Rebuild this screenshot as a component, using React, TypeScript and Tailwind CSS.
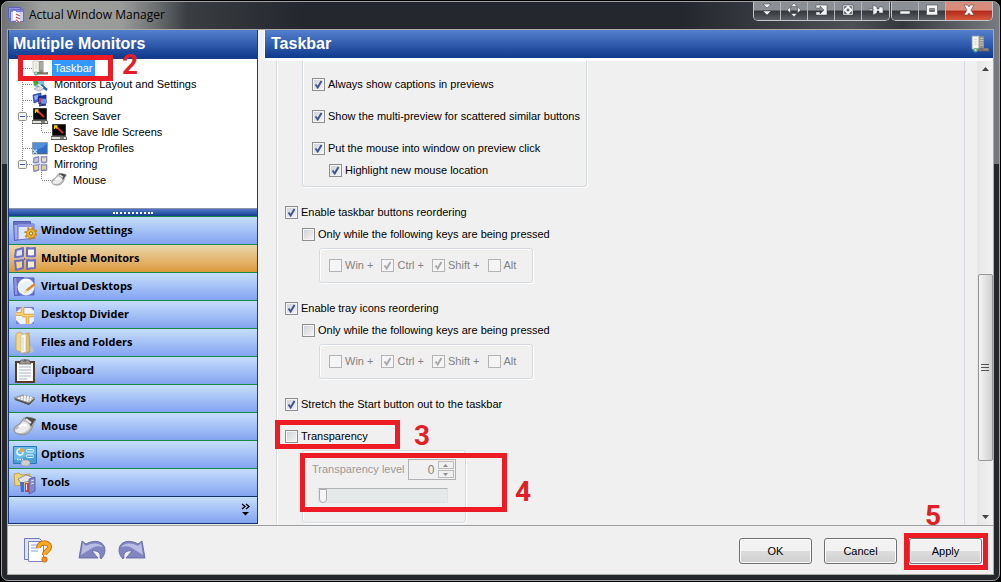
import { useState } from "react";
import type { ReactNode } from "react";
import clsx from "clsx";

const UI_FONT = "font-['Liberation_Sans',Arial,sans-serif]";
const CAPTION_FONT = "font-['Open_Sans','Noto_Sans',sans-serif]";

/* ---------- icons ---------- */

type IconProps = { className?: string };

function AppIcon() {
  return (
    <svg width="16" height="16" viewBox="0 0 16 16" aria-hidden="true">
      <path d="M.5.500h12v11H.5z" fill="#8d94e0" stroke="#5a60bc" />
      <path d="M2.500 2.500h13v12h-13z" fill="#c9d3f6" stroke="#6a70c6" />
      <path d="M3 3h12v2H3z" fill="#7e85d8" />
      <path d="M5 4h3v9H5z" fill="#fff" />
      <path d="M8 5l4 2v8H8z" fill="#fff" />
      <path d="M8 7l4 2M8 10l4 2M8 13l3 2" stroke="#d04a3c" strokeWidth="1.300" />
    </svg>
  );
}

function TaskbarIcon({ className = "size-4" }: IconProps) {
  return (
    <svg className={className} viewBox="0 0 16 16" aria-hidden="true">
      <path d="M6.500 1h5v11h-5z" fill="#8f8e88" />
      <path d="M8 3h3M8 5h3M8 7h3M8 9h3" stroke="#d2d0c8" strokeWidth=".8" />
      <path d="M1 1h6v11.500H1z" fill="#f4f4ee" stroke="#b5b5ab" strokeWidth=".7" />
      <path d="M3 4h2M3 6h2M3 8h2" stroke="#c0c0b8" strokeWidth=".6" />
      <path d="M5 12h11v2.500H5z" fill="#77736a" />
      <path d="M11 12.500h4" stroke="#a39a86" />
      <circle cx="4" cy="13.500" r="2" fill="#4f9fb8" />
      <circle cx="4" cy="13.300" r="1" fill="#d9e66a" />
    </svg>
  );
}

function LayoutIcon({ className = "size-4" }: IconProps) {
  return (
    <svg className={className} viewBox="0 0 16 16" aria-hidden="true">
      <path d="M2 2l8-1 2 8-8 2z" fill="#7cc4ee" stroke="#9aa3b2" />
      <path d="M1 4l4-2 2 6-5 2z" fill="#4ba53f" />
      <path d="M2 13l6-3 4 3-5 2z" fill="#d8dce2" stroke="#8e949e" strokeWidth=".6" />
      <path d="M9 9l6 5" stroke="#2464b4" strokeWidth="2.500" />
      <path d="M6 8l5 4" stroke="#f1f5fa" strokeWidth="1.500" />
    </svg>
  );
}

function BackgroundIcon({ className = "size-4" }: IconProps) {
  return (
    <svg className={className} viewBox="0 0 16 16" aria-hidden="true">
      <path d="M1 3l8-2v7l-7 3z" fill="#3c62d8" stroke="#2a3f98" strokeWidth=".8" />
      <path d="M2 4l4-1v4l-3 1z" fill="#8fb4ff" />
      <path d="M6 5l8-2v8l-7 1z" fill="#1d2fa8" stroke="#15207a" strokeWidth=".8" />
      <path d="M7 6l3 0 1 4-4 1z" fill="#d23c3c" />
      <circle cx="12" cy="9.500" r="3" fill="#6f8cf0" />
      <path d="M7 13.500l7-1" stroke="#27308a" strokeWidth="2" />
    </svg>
  );
}

function ScreenSaverIcon({ className = "size-4" }: IconProps) {
  return (
    <svg className={className} viewBox="0 0 16 16" aria-hidden="true">
      <path d="M1.500.500h13v11h-13z" fill="#050505" stroke="#3a3a3a" />
      <path d="M5 2.500l7 6.500" stroke="#d8341c" strokeWidth="1.800" />
      <path d="M3.500 5V2h3M4 2.500l2.500 2" stroke="#f6c928" strokeWidth="1.300" fill="none" />
      <path d="M0 12.500h15l1 3H0z" fill="#e4e1d8" stroke="#1c1c1c" strokeWidth=".7" />
      <path d="M9 14h4" stroke="#222" />
    </svg>
  );
}

function DesktopIcon({ className = "size-4" }: IconProps) {
  return (
    <svg className={className} viewBox="0 0 16 16" aria-hidden="true">
      <path d="M.5 2.500h15v11.500H.5z" fill="#2f6fc8" stroke="#8f9cab" />
      <path d="M1 3h14c-3 5-8 6-14 7z" fill="#4f8fdc" />
      <path d="M1 13.500h14" stroke="#51657e" />
      <path d="M1 9.500l4 4M5 9.500l-4 4" stroke="#c8e4f6" strokeWidth="1.200" />
    </svg>
  );
}

function MonitorsIcon({ className = "size-6", muted }: IconProps & { muted?: boolean }) {
  const edge = muted ? "#8c8cb8" : "#6a6ec2";
  return (
    <svg className={className} viewBox="0 0 24 24" aria-hidden="true">
      <g stroke={edge} strokeWidth="2" strokeLinejoin="round">
        <path d="M3 3q4-1 7-2v8q-3 1-8 1z" fill={muted ? "#c4c8de" : "#dfe3f4"} />
        <path d="M14 1q4 1 8 0v8q-4 1-8 0z" fill={muted ? "#e6dfc4" : "#fdfaf0"} />
        <path d="M2 14q4 0 8-1v8q-3 1-7 2z" fill="#edd692" />
        <path d="M14 13q4 1 8 0v8q-4 0-8 1z" fill={muted ? "#ddcf9f" : "#f8ecc6"} />
      </g>
      <path d="M3 11.500l7-.5M14 11h7" stroke="#b9bce6" />
      <path d="M11 11l2 1-2 1z" fill="#4b4f9d" />
    </svg>
  );
}

function MouseIcon({ className = "size-6" }: IconProps) {
  return (
    <svg className={className} viewBox="0 0 24 24" aria-hidden="true">
      <path d="M10 4c4-3 9-2 13 1-2 2-3 5-4 8-2 6-9 8-14 6-5-1-5-6-2-8 4-2 5-4 7-7z" fill="#bcbcbc" stroke="#8d8d8d" />
      <path d="M9 7c4-1 7 2 8 5-2 4-6 6-10 6-3 0-5-1-5-3 4-1 5-4 7-8z" fill="#ececec" />
      <path d="M6 12c2-2 5-3 8-1" stroke="#fff" strokeWidth="2" fill="none" />
      <path d="M13 2l10 2c-2 2-3 4-5 8-1-4-3-6-6-8z" fill="#4a4a4a" />
      <path d="M13 4l5 4" stroke="#e8e8e8" strokeWidth="2" />
    </svg>
  );
}

function WindowSettingsIcon() {
  return (
    <svg className="size-6" viewBox="0 0 24 24" aria-hidden="true">
      <path d="M.5 2.500h17v16l-16 3z" fill="#a4aaf0" stroke="#5158b4" />
      <path d="M1 3h16v3H1z" fill="#6b72cc" />
      <path d="M5 5h16v14l-16 2z" fill="#dde8fc" stroke="#686fc4" />
      <path d="M5 5h16v3H5z" fill="#8d93e2" />
      <circle cx="18" cy="14.500" r="5.500" fill="none" stroke="#c88a1a" strokeWidth="2.500" strokeDasharray="2 2.300" />
      <circle cx="18" cy="14.500" r="4.500" fill="#f4b62c" stroke="#b97b10" strokeWidth=".8" />
      <circle cx="18" cy="14.500" r="1.700" fill="#fff6d6" stroke="#8c5f12" />
    </svg>
  );
}

function VirtualDesktopsIcon() {
  return (
    <svg className="size-6" viewBox="0 0 24 24" aria-hidden="true">
      <path d="M.5 2.500h10v17l-9 1z" fill="#8f96e4" stroke="#5057b0" />
      <path d="M4 3h17v17H5z" fill="#7177cb" stroke="#5b61b9" />
      <circle cx="13" cy="12" r="8.500" fill="#e6f1ff" />
      <path d="M7 9c2-4 7-5 10-3" stroke="#fff" strokeWidth="2" fill="none" />
      <path d="M13 16l9-7" stroke="#e18b2a" strokeWidth="2.500" />
      <path d="M11 18l3-2.500" stroke="#f4d6a2" strokeWidth="2" />
    </svg>
  );
}

function DividerIcon() {
  return (
    <svg className="size-6" viewBox="0 0 24 24" aria-hidden="true">
      <path d="M3 4h18v17H3z" fill="#7a80d4" />
      <path d="M8 5h10l3 3v10l-3 3H7l-4-4V9z" fill="#edf4ff" />
      <path d="M9.500 4v7H3M9 12.500h12M14.500 12v9" stroke="#d9932e" strokeWidth="3.500" fill="none" />
      <path d="M9.500 4v7H3M9 12.500h12M14.500 12v9" stroke="#f6cf72" strokeWidth="2" fill="none" />
    </svg>
  );
}

function FoldersIcon() {
  return (
    <svg className="size-6" viewBox="0 0 24 24" aria-hidden="true">
      <path d="M3 3l4-2 3 2v19l-7-3z" fill="#f2d78b" stroke="#c49c43" strokeWidth=".7" />
      <path d="M12 3l4-1 1 18-5 3z" fill="#e4bf66" stroke="#b68e3b" strokeWidth=".7" />
      <path d="M8 4l5-1v18l-5 1z" fill="#f8f8f6" stroke="#b8b8b0" strokeWidth=".6" />
      <path d="M10 6v14" stroke="#bfc4cd" strokeWidth=".7" />
      <path d="M17 15l3 1 1 5-4 1z" fill="#b9c0d0" />
    </svg>
  );
}

function ClipboardIcon() {
  return (
    <svg className="size-6" viewBox="0 0 24 24" aria-hidden="true">
      <path d="M2 2h20v22H2z" fill="#5b3a22" />
      <path d="M4 4h16v18H4z" fill="#fcfcfa" />
      <path d="M6 8h12M6 11h12M6 14h12M6 17h12M6 20h8" stroke="#a9b8c9" />
      <path d="M8 1h8l2 4H6z" fill="#9a9a98" stroke="#4d4d4b" strokeWidth=".7" />
      <circle cx="12" cy="1.500" r="1.500" fill="#6c6c6a" />
    </svg>
  );
}

function KeyboardIcon() {
  return (
    <svg className="size-6" viewBox="0 0 24 24" aria-hidden="true">
      <path d="M1 12l9-4 12 4-6 6z" fill="#5d5d5d" />
      <path d="M1 11l9-3 12 3-6 5z" fill="#bdbdbd" stroke="#7d7d7d" strokeWidth=".7" />
      <path d="M5 11l10 3M8 10l10 3M11 9l9 2" stroke="#fff" strokeWidth="1.500" strokeDasharray="2 1" />
      <path d="M2 12.500l14 5 5-5" stroke="#484848" fill="none" />
    </svg>
  );
}

function OptionsIcon() {
  return (
    <svg className="size-6" viewBox="0 0 24 24" aria-hidden="true">
      <path d="M.5 3.500h23v17H.5z" fill="#4a9fd6" stroke="#2a79b2" />
      <path d="M1 4h22v7L1 17z" fill="#6dbbe6" />
      <circle cx="7" cy="9" r="3" fill="#6dbbe6" stroke="#eef8ff" strokeWidth="1.500" />
      <path d="M7 9V5A4 4 0 0111 9z" fill="#efa73a" />
      <rect x="13.500" y="6.500" width="7" height="2.500" rx="1" fill="#6dbbe6" stroke="#e9f7ff" />
      <rect x="13.500" y="12" width="7" height="2.500" rx="1" fill="#4a9fd6" stroke="#e9f7ff" />
      <path d="M4 16.500h6" stroke="#e9f7ff" strokeWidth="1.500" strokeDasharray="1.500 1" />
      <ellipse cx="12.500" cy="20" rx="4.500" ry="3" fill="#d0cfcc" stroke="#9b9b98" strokeWidth=".7" />
    </svg>
  );
}

function ToolsIcon() {
  return (
    <svg className="size-6" viewBox="0 0 24 24" aria-hidden="true">
      <path d="M1 3l5-1 2 2 9-1v10l-15 2z" fill="#efd27c" stroke="#bd963a" strokeWidth=".8" />
      <path d="M5 8l8-4 6 2-2 4-9 2z" fill="#e3e5ea" stroke="#7d828c" strokeWidth=".8" />
      <path d="M7 11h4v10H8z" fill="#3f6fca" />
      <path d="M12 12h4v9h-4z" fill="#cf4a34" />
      <path d="M13 13h1v6h-1z" fill="#f6d9ce" />
      <path d="M16 8l6-2v14l-6 3z" fill="#8288cf" stroke="#50569f" strokeWidth=".8" />
      <path d="M18 10l3-1M18 13l3-1" stroke="#e6e8ff" />
    </svg>
  );
}

function HelpIcon() {
  return (
    <svg width="28" height="26" viewBox="0 0 28 26" aria-hidden="true">
      <path d="M.5 1.500h15l2 2v19H.5z" fill="#dfe4fb" stroke="#6f76c4" />
      <path d="M4.500 4.500h15v20h-15z" fill="#fff" stroke="#7d84cd" />
      <path d="M7 8h9M7 11h8M7 14h7" stroke="#8fa2d8" />
      <path d="M14.500 11c0-6.500 11-6.500 11-1 0 4-5 3.500-5 8" stroke="#b8620c" strokeWidth="5" fill="none" />
      <path d="M14.500 11c0-6.500 11-6.500 11-1 0 4-5 3.500-5 8" stroke="#fba81e" strokeWidth="3.500" fill="none" />
      <circle cx="20.500" cy="22.500" r="2.700" fill="#fb8d17" stroke="#b8620c" strokeWidth=".7" />
    </svg>
  );
}

function UndoIcon({ flipped }: { flipped?: boolean }) {
  return (
    <svg width="28" height="22" viewBox="0 0 28 22" aria-hidden="true" className={clsx(flipped && "-scale-x-100")}>
      <path d="M4 2l4 3c8-5 19-3 19 6 0 4-2 7-4 9-1-1-1-1-1-2 1-4-3-7-8-6l6 7H1z" fill="#8286c0" stroke="#5c609e" strokeWidth=".8" strokeLinejoin="round" />
      <path d="M5 4l3 3c7-4 14-3 17 1-6-2-10 0-14 3l-8 5z" fill="#b9bde4" />
    </svg>
  );
}

/* ---------- callouts drawn on top of the dialog ---------- */

function Callout({ step, box, label }: { step: string; box: string; label: string }) {
  return (
    <>
      <span className={clsx("pointer-events-none absolute z-20 border-[5px] border-[#ed1c24]", box)} />
      <span
        className={clsx(
          "pointer-events-none absolute z-20 font-[Roboto,sans-serif] text-[28px] leading-5 font-bold text-[#e01f27]",
          label,
        )}
      >
        {step}
      </span>
    </>
  );
}

/* ---------- controls ---------- */

type CheckProps = { children: ReactNode; on?: boolean; disabled?: boolean; className?: string };

function Check({ children, on = false, disabled, className }: CheckProps) {
  return (
    <label className={clsx("flex h-4 w-fit items-center gap-[3px] whitespace-nowrap", disabled && "text-[#838383]", className)}>
      <span className="relative size-[13px] shrink-0">
        <input
          type="checkbox"
          defaultChecked={on}
          disabled={disabled}
          className="peer block size-[13px] appearance-none border border-[#8e8f8f] bg-linear-to-br from-[#cdd1d6] to-[#f6f6f6] shadow-[inset_0_0_0_1px_#f4f4f4] disabled:border-[#b4b4b4] disabled:from-[#f4f4f4]"
        />
        <svg
          viewBox="0 0 13 13"
          aria-hidden="true"
          className="pointer-events-none absolute inset-0 hidden text-[#43558f] peer-checked:block peer-disabled:text-[#a9a9ab]"
        >
          <path d="M3.500 6.500l2.200 3L9.500 3" fill="none" stroke="currentColor" strokeWidth="2" />
        </svg>
      </span>
      {children}
    </label>
  );
}

function GroupBox({ children, className }: { children: ReactNode; className?: string }) {
  return (
    <div className={clsx("w-fit rounded-[3px] border border-[#d5dbe0] shadow-[inset_1px_1px_0_#fff,1px_1px_0_#fff]", className)}>
      {children}
    </div>
  );
}

function KeyGroup() {
  return (
    <GroupBox className="mt-1.5 ml-[34px] flex h-[35px] items-center gap-2 px-[9px] pr-4">
      <Check disabled>Win +</Check>
      <Check disabled on>Ctrl +</Check>
      <Check disabled on>Shift +</Check>
      <Check disabled>Alt</Check>
    </GroupBox>
  );
}

function PushButton({ children }: { children: ReactNode }) {
  return (
    <button
      type="button"
      className="block h-[26px] w-[73px] rounded-[3px] border border-[#707070] bg-linear-to-b from-[#f2f2f2] from-50% via-[#dddddd] via-50% to-[#cfcfcf] text-[11px] shadow-[inset_0_0_0_1px_#fcfcfc]"
    >
      {children}
    </button>
  );
}

/* ---------- title bar ---------- */

const capTools: { name: string; glyph: ReactNode }[] = [
  { name: "Roll up", glyph: <path d="M4 2h8L8 6zM4 9h8l-4 4z" /> },
  { name: "Move", glyph: <path d="M8 1l3 3.500H5zM8 15l3-3.500H5zM1 8l3.500-3v6zM15 8l-3.500-3v6z" /> },
  { name: "Send to monitor", glyph: <path fillRule="evenodd" d="M3 3h11v10H3v-3h4v2l4-4-4-4v2H3z" /> },
  {
    name: "Resize",
    glyph: <path fillRule="evenodd" d="M3 3h10v10H3zM4.500 4.500v2l2-2zM11.500 4.500v2l-2-2zM4.500 11.500v-2l2 2zM11.500 11.500v-2l-2 2zM7 7v2h2V7z" />,
  },
  { name: "Pin", glyph: <path d="M5 3l4 2v2h2V5h4v6h-4V9H9v2l-4 2zM1 7h4v1.500H1z" /> },
];

function Glyph({ children }: { children: ReactNode }) {
  return (
    <svg width="16" height="16" viewBox="0 0 16 16" fill="#f4f4f4" stroke="#3a3d42" strokeWidth=".5" aria-hidden="true">
      {children}
    </svg>
  );
}

const capButton =
  "flex h-full w-[27px] items-center justify-center border-r border-[#b4b6b9] bg-linear-to-b from-[#8c8f93] from-45% via-[#33363b] via-50% to-[#5d6065] pb-0.5 last:border-r-0";
const capGroup = "flex h-[19px] overflow-hidden rounded-b-[5px] border border-t-0 border-[#c4c6c9]";

function TitleBar() {
  return (
    <header className="flex h-7 shrink-0 items-start justify-between">
      <div className="flex h-[26px] items-center gap-[5px]">
        <AppIcon />
        <h1 className={clsx("text-xs text-black", CAPTION_FONT)}>Actual Window Manager</h1>
      </div>
      <div className="flex gap-px">
        <div className={capGroup}>
          {capTools.map((t) => (
            <button key={t.name} type="button" aria-label={t.name} className={capButton}>
              <Glyph>{t.glyph}</Glyph>
            </button>
          ))}
        </div>
        <div className={capGroup}>
          <button type="button" aria-label="Minimize" className={capButton}>
            <Glyph><path d="M3 9h10v3H3z" /></Glyph>
          </button>
          <button type="button" aria-label="Maximize" className={capButton}>
            <Glyph><path fillRule="evenodd" d="M2.500 3h11v10h-11zM5.500 6.500v3h5v-3z" /></Glyph>
          </button>
          <button
            type="button"
            aria-label="Close"
            className="flex h-full w-[46px] items-center justify-center bg-linear-to-b from-[#d98c7c] from-45% via-[#b3261a] via-50% to-[#d4593c] pb-0.5"
          >
            <Glyph><path d="M3 3h3.500L8 5l1.500-2H13l-3 5 3 5H9.500L8 11l-1.500 2H3l3-5z" /></Glyph>
          </button>
        </div>
      </div>
    </header>
  );
}

/* ---------- sidebar ---------- */

type TreeNode = { label: string; icon: ReactNode; expandable?: boolean; child?: boolean; trunk: "full" | "half" | "none" };

const tree: TreeNode[] = [
  { label: "Taskbar", icon: <TaskbarIcon />, trunk: "full" },
  { label: "Monitors Layout and Settings", icon: <LayoutIcon />, trunk: "full" },
  { label: "Background", icon: <BackgroundIcon />, trunk: "full" },
  { label: "Screen Saver", icon: <ScreenSaverIcon />, expandable: true, trunk: "full" },
  { label: "Save Idle Screens", icon: <ScreenSaverIcon />, child: true, trunk: "full" },
  { label: "Desktop Profiles", icon: <DesktopIcon />, trunk: "full" },
  { label: "Mirroring", icon: <MonitorsIcon className="size-4" muted />, expandable: true, trunk: "half" },
  { label: "Mouse", icon: <MouseIcon className="size-4" />, child: true, trunk: "none" },
];

function TreeRow({ node, selected, onSelect }: { node: TreeNode; selected: boolean; onSelect: () => void }) {
  return (
    <li className="flex h-4 items-center">
      <svg width="14" height="16" aria-hidden="true" stroke="#8a8a8a" strokeDasharray="1 1" className="shrink-0">
        {node.trunk !== "none" && <path d={node.trunk === "full" ? "M4.500 0v16" : "M4.500 0v8"} />}
        {!node.child && <path d="M5 8.500h9" />}
        {node.expandable && (
          <g strokeDasharray="none">
            <rect x=".5" y="4.500" width="8" height="8" rx="1" fill="#f4f4f4" stroke="#919191" />
            <path d="M2 8.500h5" stroke="#3b5aa5" />
          </g>
        )}
      </svg>
      {node.child && (
        <svg width="19" height="16" aria-hidden="true" stroke="#8a8a8a" strokeDasharray="1 1" fill="none" className="shrink-0">
          <path d="M9.500 0v8M10 8.500h9" />
        </svg>
      )}
      {node.icon}
      <button
        type="button"
        onClick={onSelect}
        className={clsx("ml-1 h-4 px-0.5 text-[11px] leading-4", selected && "bg-[#3399ff] text-white")}
      >
        {node.label}
      </button>
    </li>
  );
}

const sections: { label: string; icon: ReactNode }[] = [
  { label: "Window Settings", icon: <WindowSettingsIcon /> },
  { label: "Multiple Monitors", icon: <MonitorsIcon /> },
  { label: "Virtual Desktops", icon: <VirtualDesktopsIcon /> },
  { label: "Desktop Divider", icon: <DividerIcon /> },
  { label: "Files and Folders", icon: <FoldersIcon /> },
  { label: "Clipboard", icon: <ClipboardIcon /> },
  { label: "Hotkeys", icon: <KeyboardIcon /> },
  { label: "Mouse", icon: <MouseIcon /> },
  { label: "Options", icon: <OptionsIcon /> },
  { label: "Tools", icon: <ToolsIcon /> },
];

const panelHeading = "flex h-7 shrink-0 items-center bg-linear-to-b from-[#5580cf] to-[#0d3a8d] text-base font-bold text-white";

function Sidebar() {
  const [node, setNode] = useState("Taskbar");
  const [section, setSection] = useState("Multiple Monitors");

  return (
    <aside className="mb-px flex w-[250px] shrink-0 flex-col border-x border-[#1b3c80]">
      <h2 className={clsx(panelHeading, "pl-1")}>Multiple Monitors</h2>
      <div className="relative grow border-t border-[#1b3c80] bg-white pt-px pl-[9px]">
        <ul>
          {tree.map((n) => (
            <TreeRow key={n.label} node={n} selected={node === n.label} onSelect={() => setNode(n.label)} />
          ))}
        </ul>
        <Callout step="2" box="top-[-4px] left-[9px] h-[26px] w-[95px]" label="top-[-4px] left-[113px]" />
      </div>
      <div className="flex h-2 shrink-0 items-center justify-center border-t border-[#8a93a8] bg-linear-to-b from-[#5279c6] to-[#123f92]">
        <span className="w-10 border-t-2 border-dotted border-white" />
      </div>
      <nav aria-label="Sections" className={CAPTION_FONT}>
        {sections.map((s) => (
          <button
            key={s.label}
            type="button"
            onClick={() => setSection(s.label)}
            className={clsx(
              "flex h-7 w-full items-center gap-1 border-t border-[#16894c] bg-linear-to-b pl-1 text-[11px] font-bold",
              section === s.label ? "from-[#ead7ac] to-[#dc9a36]" : "from-[#c6defa] to-[#84a3f0]",
            )}
          >
            {s.icon}
            {s.label}
          </button>
        ))}
      </nav>
      <div className="flex h-7 shrink-0 items-center justify-end border-y border-[#10306e] bg-linear-to-b from-[#c6defa] to-[#84a3f0] pr-1.5">
        <button type="button" aria-label="Configure buttons">
          <svg width="10" height="14" viewBox="0 0 10 14" fill="none" stroke="#000" strokeWidth="1.300" aria-hidden="true">
            <path d="M1 1l3 2.500L1 6M5 1l3 2.500L5 6" />
            <path d="M1 9h7l-3.500 3.500z" fill="#000" stroke="none" />
          </svg>
        </button>
      </div>
    </aside>
  );
}

/* ---------- settings page ---------- */

function SettingsPage() {
  return (
    <div className="ml-3 min-w-0 grow border-x border-[#d5dbe0] pl-2 text-[11px] shadow-[inset_1px_0_0_#fff]">
      <GroupBox className="ml-[17px] rounded-t-none border-t-0 pt-[15px] pr-1.5 pb-2 pl-[9px]">
        <Check on>Always show captions in previews</Check>
        <Check on className="mt-4">Show the multi-preview for scattered similar buttons</Check>
        <Check on className="mt-4">Put the mouse into window on preview click</Check>
        <Check on className="mt-1.5 ml-[17px]">Highlight new mouse location</Check>
      </GroupBox>

      <Check on className="mt-[17px]">Enable taskbar buttons reordering</Check>
      <Check className="mt-1.5 ml-[17px]">Only while the following keys are being pressed</Check>
      <KeyGroup />

      <Check on className="mt-[17px]">Enable tray icons reordering</Check>
      <Check className="mt-1.5 ml-[17px]">Only while the following keys are being pressed</Check>
      <KeyGroup />

      <Check on className="mt-[17px]">Stretch the Start button out to the taskbar</Check>
      <div className="relative mt-4">
        <Check>Transparency</Check>
        <Callout step="3" box="top-[-8px] left-[-10px] h-[29px] w-[125px]" label="top-[-2px] left-[129px]" />
      </div>
      <div className="relative">
        <GroupBox className="mt-1.5 ml-[17px] h-[73px] px-[9px] pt-2">
          <div className="flex items-center gap-[3px] text-[#9a9a9a]">
            <label htmlFor="level">Transparency level</label>
            <div className="flex h-[21px] w-12 border border-[#b0b3b6]">
              <input id="level" type="text" defaultValue="0" disabled className="w-7 bg-transparent pr-0.5 text-right text-xs text-[#838383]" />
              <div className="flex grow flex-col justify-between p-px">
                {["M0 3h5L2.500 0z", "M0 0h5L2.500 3z"].map((d, i) => (
                  <button
                    key={d}
                    type="button"
                    disabled
                    aria-label={i === 0 ? "Increase" : "Decrease"}
                    className="flex h-2 items-center justify-center border border-[#bcbcbc]"
                  >
                    <svg width="5" height="3" fill="#8c8c8c" aria-hidden="true"><path d={d} /></svg>
                  </button>
                ))}
              </div>
            </div>
          </div>
          <input
            type="range"
            aria-label="Transparency level"
            min={0}
            max={100}
            defaultValue={0}
            disabled
            className="mt-2 ml-1.5 block h-[15px] w-[130px] appearance-none border border-[#dfe3e4] border-t-[#b0b3b6] bg-[#e5e9e9] [&::-webkit-slider-thumb]:h-[14px] [&::-webkit-slider-thumb]:w-2 [&::-webkit-slider-thumb]:appearance-none [&::-webkit-slider-thumb]:rounded-b-[4px] [&::-webkit-slider-thumb]:border [&::-webkit-slider-thumb]:border-[#adadad] [&::-webkit-slider-thumb]:bg-[#f5f5f5]"
          />
        </GroupBox>
        <Callout step="4" box="top-[3px] left-[15px] h-[59px] w-[207px]" label="top-[32px] left-[230px]" />
      </div>
    </div>
  );
}

function ScrollBar() {
  return (
    <div className="ml-3 flex w-4 shrink-0 flex-col items-center bg-linear-to-r from-[#e6e6e6] to-[#f2f2f2] py-1.5">
      <svg width="7" height="4" fill="#444" aria-hidden="true"><path d="M0 4h7L3.500 0z" /></svg>
      <div className="flex-[204]" />
      <div className="flex w-[15px] flex-[186] items-center justify-center rounded-[2px] border border-[#979797] bg-linear-to-r from-[#f5f5f5] to-[#cfd0d2]">
        <svg width="8" height="8" stroke="#555" aria-hidden="true"><path d="M0 .5h8M0 3.500h8M0 6.500h8" /></svg>
      </div>
      <div className="flex-[54]" />
      <svg width="7" height="4" fill="#444" aria-hidden="true"><path d="M0 0h7L3.500 4z" /></svg>
    </div>
  );
}

export default function App() {
  return (
    <div className={clsx("flex min-h-screen bg-black p-px text-black", UI_FONT)}>
      <div className="flex grow flex-col rounded-[7px] border border-[#9fa2a5] bg-[#24272c] bg-[linear-gradient(90deg,#6f7276_0,#9fa19f_40px,#999b99_120px,#6b6e70_155px,#3a3d42_185px,#24272d_300px,#24272d_680px,#4d5156_850px,#34373c_900px,#777a7e_100%)] bg-[length:100%_162px] bg-no-repeat px-[6px] pb-[6px]">
        <TitleBar />
        <div className="flex grow flex-col bg-[#f0f0f0] outline outline-[#a9aba0]">
          <div className="flex grow border-b border-[#a0a0a0]">
            <Sidebar />
            <main className="ml-1.5 flex min-w-0 grow flex-col">
              <div className={clsx(panelHeading, "justify-between border-l border-white pr-1 pl-1.5")}>
                <h2>Taskbar</h2>
                <TaskbarIcon className="size-[18px]" />
              </div>
              <div className="flex grow border-t-3 border-white">
                <SettingsPage />
                <ScrollBar />
              </div>
            </main>
          </div>
          <footer className="flex h-12 shrink-0 items-center justify-between pt-0.5 pr-[11px] pl-4">
            <div className="flex items-center pb-0.5">
              <button type="button" aria-label="Help"><HelpIcon /></button>
              <button type="button" aria-label="Undo" className="ml-[26px]"><UndoIcon /></button>
              <button type="button" aria-label="Redo" className="ml-3"><UndoIcon flipped /></button>
            </div>
            <div className="flex gap-3">
              <PushButton>OK</PushButton>
              <PushButton>Cancel</PushButton>
              <div className="relative">
                <PushButton>Apply</PushButton>
                <Callout step="5" box="top-[-5px] left-[-5px] h-[37px] w-[84px]" label="top-[-32px] left-[16px]" />
              </div>
            </div>
          </footer>
        </div>
      </div>
    </div>
  );
}
